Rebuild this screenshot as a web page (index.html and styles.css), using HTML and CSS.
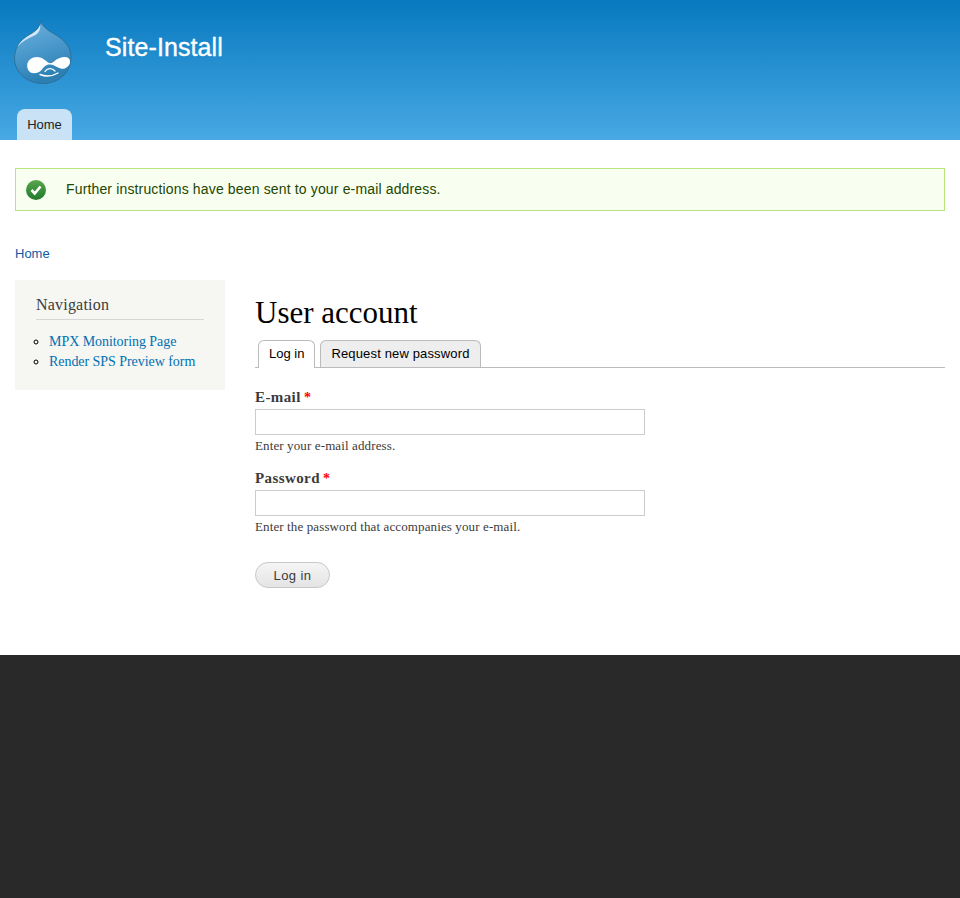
FILE: index.html
```html
<!DOCTYPE html>
<html lang="en">
<head>
<meta charset="utf-8">
<title>User account | Site-Install</title>
<link rel="stylesheet" href="styles.css">
</head>
<body>
<header class="site-header">
  <div class="branding">
    <svg class="logo" width="58" height="66" viewBox="0 0 58 66" aria-hidden="true">
      <defs>
        <linearGradient id="drop" x1="0" y1="0" x2="0.3" y2="1">
          <stop offset="0" stop-color="#6fb3dd"/>
          <stop offset="0.55" stop-color="#4a98cb"/>
          <stop offset="1" stop-color="#2b7fb3"/>
        </linearGradient>
      </defs>
      <path d="M27 1.500C27.500 6 31 9 36 12.500C46 18 57 25 57 38C57 53.500 45 64.500 29 64.500C13 64.500 0.500 53.500 0.500 39C0.500 25 11 18 18 14C22.500 11.500 26.500 7 27 1.500Z" fill="url(#drop)" stroke="#2f7199" stroke-width="1"/>
      <path d="M26 6C25 9.500 21.500 12.500 17.500 15C11 18.500 6 22.500 3 28C8 22.500 14 19.500 20.500 16.500C24.500 14.500 27 10.500 26 6Z" fill="#cfe7f6"/>
      <path d="M13.200 46C13.500 41 18 38 23 38C27.500 38 31 41 34 43.500C36 45 38 44 40 42.500C43 39.500 47 38 51 38C55 38 57 41 55.800 44.500C54.500 48.500 50 50.500 46.500 49.500C43 48.500 40 45.800 36.500 45.500C32 45 30 48 27.500 51C24.500 54.500 19.500 55 16.500 53.500C14 52 13 49 13.200 46Z" fill="#fff"/>
      <path d="M26 55.500C31 57.500 38 57.500 44 54" fill="none" stroke="#fff" stroke-width="1.400" stroke-linecap="round"/>
      <path d="M31 52.500C33 49 38 48.500 41 52" fill="none" stroke="#fff" stroke-width="1.300" stroke-linecap="round"/>
    </svg>
    <div class="site-name">Site-Install</div>
  </div>
  <nav class="main-menu"><a class="main-tab" href="#">Home</a></nav>
</header>

<div class="page">
  <div class="message">
    <svg class="message-icon" width="20" height="20" viewBox="0 0 20 20" aria-hidden="true">
      <defs>
        <linearGradient id="ok" x1="0" y1="0" x2="0" y2="1">
          <stop offset="0" stop-color="#5aa64c"/>
          <stop offset="1" stop-color="#1f7a2c"/>
        </linearGradient>
      </defs>
      <circle cx="10" cy="10" r="10" fill="url(#ok)"/>
      <path d="M5.500 10L8.700 13.500L14.500 6.500" fill="none" stroke="#fff" stroke-width="2.600"/>
    </svg>
    <span class="message-text">Further instructions have been sent to your e-mail address.</span>
  </div>

  <div class="breadcrumb"><a href="#">Home</a></div>

  <div class="columns">
    <aside class="sidebar">
      <h2 class="block-title">Navigation</h2>
      <ul class="menu">
        <li><a href="#">MPX Monitoring Page</a></li>
        <li><a href="#">Render SPS Preview form</a></li>
      </ul>
    </aside>

    <main class="content">
      <h1 class="page-title">User account</h1>
      <ul class="tabs">
        <li class="tab tab-active"><a href="#">Log in</a></li>
        <li class="tab"><a href="#">Request new password</a></li>
      </ul>
      <form class="login-form">
        <div class="field">
          <label class="field-label" for="mail">E-mail <span class="required">*</span></label>
          <input class="field-input" id="mail" type="text">
          <div class="field-help">Enter your e-mail address.</div>
        </div>
        <div class="field">
          <label class="field-label" for="pass">Password <span class="required">*</span></label>
          <input class="field-input" id="pass" type="password">
          <div class="field-help">Enter the password that accompanies your e-mail.</div>
        </div>
        <button class="submit" type="button">Log in</button>
      </form>
    </main>
  </div>
</div>

<footer class="site-footer"></footer>
</body>
</html>
```
FILE: styles.css
```css
* { box-sizing: border-box; }

html, body { height: 100%; }

body {
  margin: 0;
  display: flex;
  flex-direction: column;
  min-height: 898px;
  background: #fff;
  font-family: "Liberation Sans", Arial, sans-serif;
  color: #3b3b3b;
}

a { text-decoration: none; }

.site-header {
  height: 140px;
  display: flex;
  flex-direction: column;
  justify-content: space-between;
  background: linear-gradient(to bottom, #0779bf, #48a9e4);
}

.branding {
  display: flex;
  align-items: flex-start;
  padding: 19px 0 0 14px;
}

.site-name {
  margin: 14px 0 0 33px;
  font-size: 25px;
  line-height: 28px;
  letter-spacing: 0.1px;
  color: #fff;
  -webkit-text-stroke: 0.35px #fff;
}

.main-menu { padding-left: 17px; }

.main-tab {
  display: block;
  width: 55px;
  height: 31px;
  background: #c9e2f5;
  border-radius: 8px 8px 0 0;
  text-align: center;
  font-size: 13px;
  line-height: 31px;
  color: #222;
}

.page {
  padding: 28px 15px 0;
  height: 515px;
}

.message {
  display: flex;
  align-items: center;
  height: 43px;
  padding-left: 10px;
  gap: 20px;
  background: #f8fff0;
  border: 1px solid #b7e57c;
  font-size: 14px;
  color: #234600;
}

.message-text {
  position: relative;
  top: -1px;
  letter-spacing: 0.15px;
}

.breadcrumb {
  margin-top: 34px;
  font-size: 13px;
  line-height: 17px;
}

.breadcrumb a { color: #0d5ba5; }

.columns {
  display: flex;
  align-items: flex-start;
  margin-top: 18px;
  gap: 30px;
}

.sidebar {
  width: 210px;
  height: 110px;
  padding: 15px 21px 0;
  background: #f6f6f2;
  font-family: "Liberation Serif", Georgia, serif;
}

.block-title {
  margin: 0 0 12px;
  padding-bottom: 4px;
  border-bottom: 1px solid #d6d6d6;
  font-size: 16px;
  line-height: 20px;
  font-weight: normal;
  letter-spacing: 0.2px;
  color: #3b3b3b;
}

.menu {
  margin: 0;
  padding: 0 0 0 13px;
  list-style: circle;
  font-size: 14px;
  line-height: 20px;
  letter-spacing: -0.05px;
}

.menu a { color: #0071b3; }

.menu li::marker { color: #000; }

.content {
  flex: 1;
  min-width: 0;
  padding-top: 16px;
  font-family: "Liberation Serif", Georgia, serif;
}

.page-title {
  margin: 0 0 10px;
  font-size: 31px;
  line-height: 34px;
  font-weight: normal;
  color: #000;
}

.tabs {
  display: flex;
  gap: 5px;
  height: 28px;
  margin: 0;
  padding: 0 0 0 3px;
  list-style: none;
  border-bottom: 1px solid #bbb;
  font-family: "Liberation Sans", Arial, sans-serif;
  font-size: 13px;
}

.tab {
  height: 27px;
  padding: 0 10px;
  background: #eee;
  border: 1px solid #bbb;
  border-radius: 6px 6px 0 0;
  border-bottom: 0;
  line-height: 25px;
  letter-spacing: 0.15px;
}

.tab a { color: #000; }

.tab-active {
  height: 28px;
  background: #fff;
  letter-spacing: 0;
}

.login-form { padding-top: 21px; }

.field { margin-bottom: 17px; }

.field-label {
  display: block;
  margin-bottom: 3px;
  font-size: 15px;
  line-height: 16px;
  font-weight: bold;
  letter-spacing: 0.4px;
  word-spacing: -1px;
  color: #3b3b3b;
}

.required {
  font-size: 14px;
  letter-spacing: 0;
  color: #f00;
}

.field-input {
  display: block;
  width: 390px;
  height: 26px;
  padding: 2px;
  background: #fff;
  border: 1px solid #ccc;
  border-radius: 0;
  outline: none;
}

.field-help {
  margin-top: 3px;
  font-size: 13px;
  line-height: 15px;
  letter-spacing: 0.12px;
  color: #3b3b3b;
}

.submit {
  display: block;
  margin-top: 28px;
  width: 75px;
  height: 26px;
  padding: 0;
  background: linear-gradient(to bottom, #f5f5f5, #e4e4e4);
  border: 1px solid #c8c8c8;
  border-radius: 13px;
  font-family: "Liberation Sans", Arial, sans-serif;
  font-size: 13px;
  letter-spacing: 0.4px;
  color: #3a3a3a;
}

.site-footer {
  flex: 1;
  background: #292929;
}
```
